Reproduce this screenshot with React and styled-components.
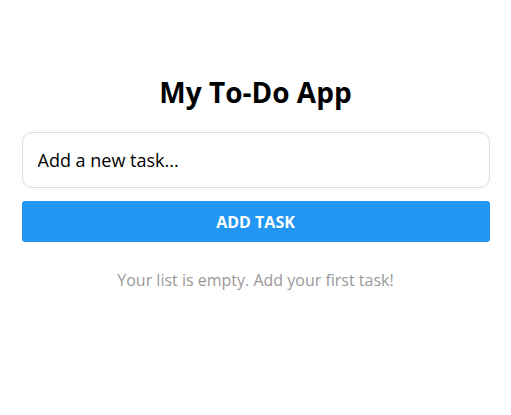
import React, { useState } from "react";
import styled, { createGlobalStyle } from "styled-components";

const GlobalStyle = createGlobalStyle`
  html, body {
    margin: 0;
    padding: 0;
    background: #ffffff;
    font-family: "Open Sans", "Noto Sans", sans-serif;
  }
`;

const Container = styled.div`
  max-width: 500px;
  margin: 0 auto;
  padding: 73px 16px 0;
  box-sizing: border-box;
  display: flex;
  flex-direction: column;
`;

const Title = styled.h1`
  margin: 0 0 21px;
  text-align: center;
  font-size: 28px;
  line-height: 38px;
  font-weight: 700;
  color: #000;
`;

const Form = styled.form`
  display: flex;
  flex-direction: column;
  gap: 13px;
`;

const TaskInput = styled.input`
  height: 56px;
  box-sizing: border-box;
  padding: 0 15px;
  border: 1px solid #dddddd;
  border-radius: 10px;
  font-family: inherit;
  font-size: 18px;
  color: #000;
  outline: none;
  &::placeholder {
    color: #000;
    opacity: 1;
  }
`;

const AddButton = styled.button`
  height: 41px;
  border: none;
  border-radius: 3px;
  background: #2196f3;
  color: #fff;
  font-family: inherit;
  font-size: 16px;
  font-weight: 700;
  text-transform: uppercase;
  cursor: pointer;
`;

const EmptyText = styled.p`
  margin: 26px 0 0;
  text-align: center;
  color: #999999;
  font-size: 16px;
  line-height: 24px;
`;

export default function App() {
  const [value, setValue] = useState("");
  return (
    <>
      <GlobalStyle />
      <Container>
        <Title>My To-Do App</Title>
        <Form onSubmit={(e) => e.preventDefault()}>
          <TaskInput
            placeholder="Add a new task..."
            value={value}
            onChange={(e) => setValue(e.target.value)}
          />
          <AddButton type="submit">Add Task</AddButton>
        </Form>
        <EmptyText>Your list is empty. Add your first task!</EmptyText>
      </Container>
    </>
  );
}
